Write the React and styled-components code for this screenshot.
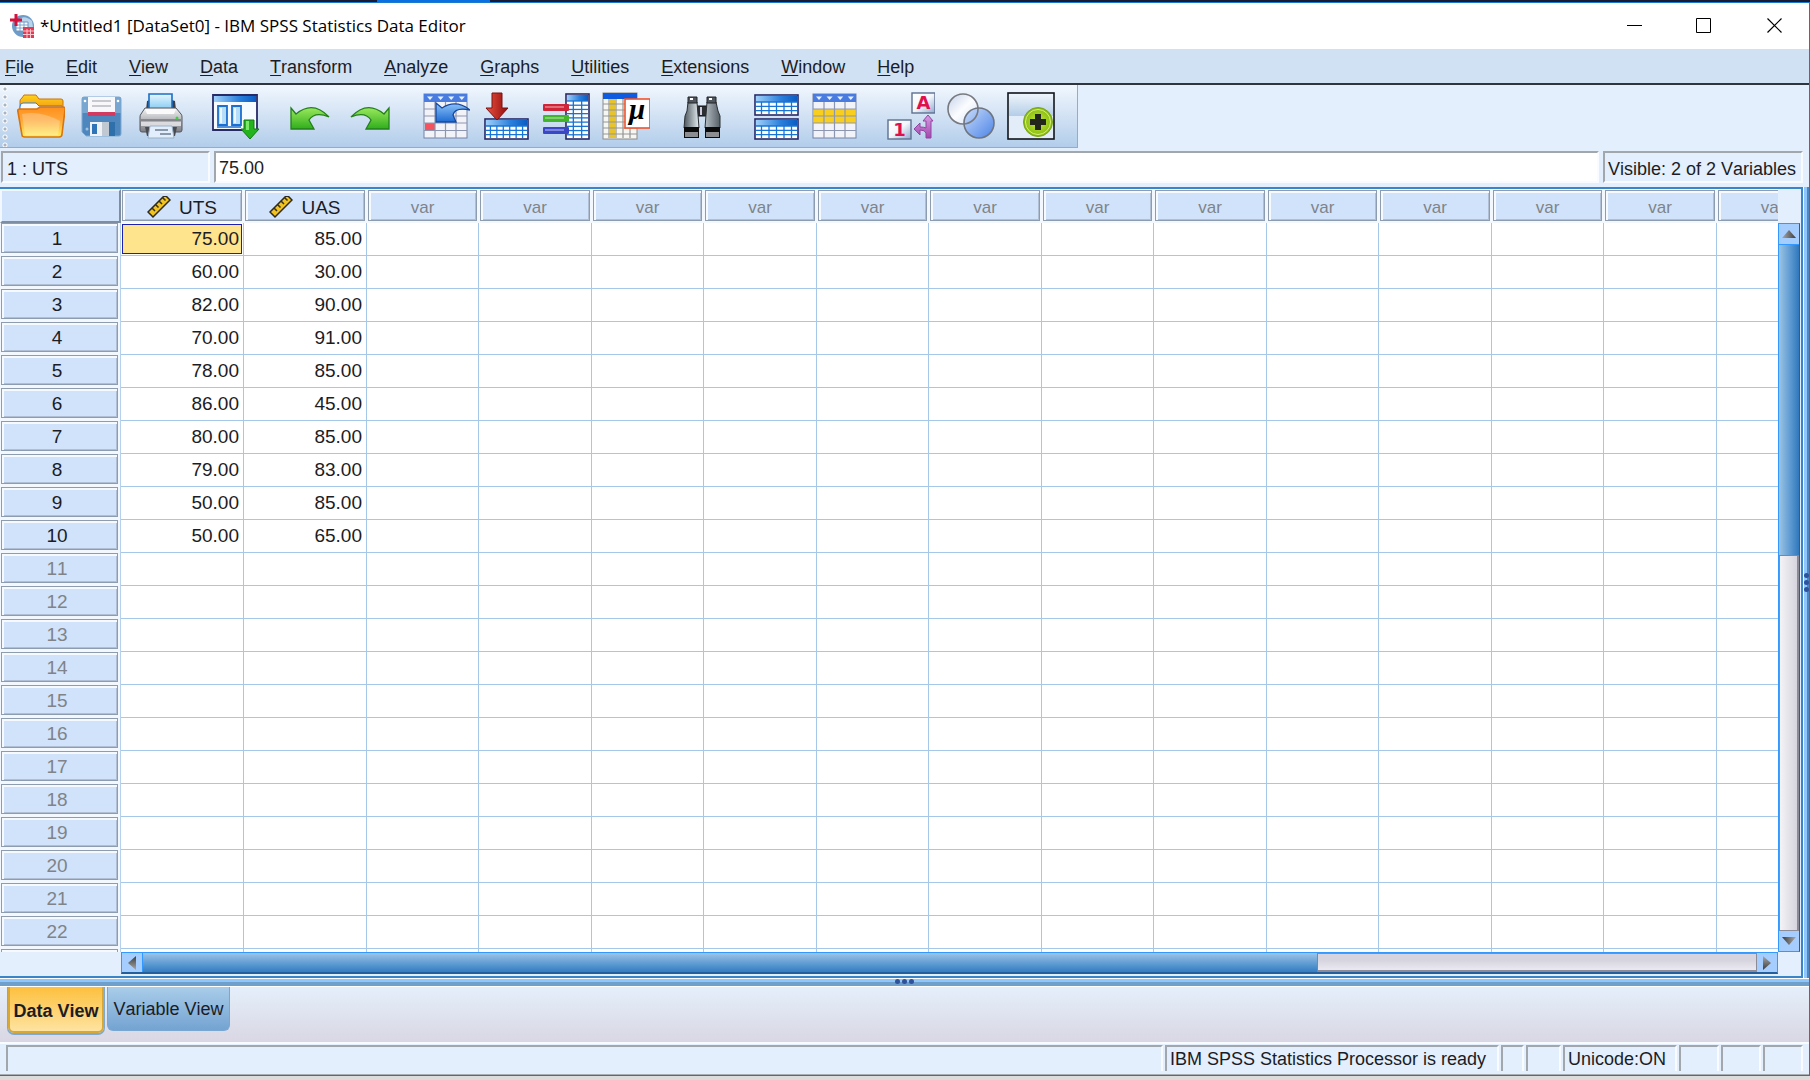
import React from "react";
import styled, { createGlobalStyle } from "styled-components";

const Global = createGlobalStyle`
  * { box-sizing: border-box; }
  body {
    margin: 0;
    background: #dcdcdc;
    color: #1c1c24;
    font: 18px/22px "Liberation Sans", Arial, sans-serif;
    font-kerning: none;
  }
  button, input { font: inherit; color: inherit; }
`;

const Desktop = styled.div`
  height: 100vh;
  min-height: 480px;
  display: flex;
  flex-direction: column;
  padding-bottom: 4px;
  overflow: hidden;
`;
const Backdrop = styled.div`
  height: 2px;
  flex: none;
  background: linear-gradient(90deg, #191a36 0 377px, #0a6fe0 377px 490px, #191a36 490px);
`;
const Window = styled.div`
  flex: 1;
  min-height: 0;
  display: flex;
  flex-direction: column;
  border: 1px solid #1a7ad0;
  border-left: 0;
  background: #e3effc;
`;

const TitleBar = styled.header`
  flex: none;
  height: 46px;
  display: flex;
  align-items: center;
  background: #fff;
  padding-left: 10px;
`;
const Title = styled.h1`
  flex: 1;
  margin: 0 0 0 6px;
  font: 400 17px/24px "Open Sans", "Noto Sans", sans-serif;
  color: #000;
  white-space: nowrap;
`;
const CaptionButton = styled.button`
  width: 70px;
  height: 46px;
  padding: 0;
  border: 0;
  background: none;
  display: flex;
  align-items: center;
  justify-content: center;
`;

const MenuBar = styled.nav`
  flex: none;
  height: 36px;
  display: flex;
  align-items: center;
  gap: 32px;
  padding: 2px 0 0 5px;
  background: #cfe1f3;
  border-bottom: 2px solid #30343c;
`;
const MenuButton = styled.button`
  padding: 0;
  border: 0;
  background: none;
  white-space: nowrap;
  u { text-underline-offset: 2px; }
`;

const ToolRow = styled.div`
  flex: none;
  display: flex;
`;
const Toolbar = styled.div`
  display: flex;
  gap: 15px;
  height: 63px;
  padding-right: 16px;
  border-right: 1px solid #a3a9b2;
  border-bottom: 1px solid #a3a9b2;
  background: linear-gradient(#f1f7fe, #d5e4f5 45%, #b2cdea);
`;
const Grip = styled.div`
  width: 11px;
  margin-right: -15px;
  background: radial-gradient(circle at 5px 4px, #a9b4c2 0 1px, #fff 2px, transparent 3px) 0 0 / 11px 8px;
`;
const ToolGroup = styled.div`
  display: flex;
`;
const ToolButton = styled.button`
  width: 60px;
  height: 62px;
  padding: 0;
  border: 0;
  background: none;
  display: flex;
  align-items: center;
  justify-content: center;
`;

const EditRow = styled.div`
  flex: none;
  display: flex;
  gap: 4px;
  height: 39px;
  padding: 3px 6px 4px 1px;
`;
const sunken = `
  border: 2px solid #a2a6ad;
  border-right-color: #f8fbff;
  border-bottom-color: #f8fbff;
`;
const CellName = styled.div`
  ${sunken}
  width: 209px;
  padding: 4px 4px 0;
  line-height: 24px;
`;
const CellInput = styled.input`
  ${sunken}
  flex: 1;
  min-width: 0;
  padding: 2px 3px 0;
  background: #fff;
  outline: 0;
`;
const VisibleCount = styled.div`
  ${sunken}
  width: 200px;
  padding: 4px 3px 0;
  line-height: 24px;
  white-space: nowrap;
`;

const Workspace = styled.main`
  flex: 1;
  min-height: 0;
  display: grid;
  grid-template: minmax(0, 1fr) 9px / minmax(0, 1fr) 6px;
`;
const Pane = styled.section`
  display: grid;
  grid-template: minmax(0, 1fr) 24px / minmax(0, 1fr) 23px;
  border: 2px solid #3a85c8;
  border-left: 0;
`;
const SideSplitter = styled.div`
  display: flex;
  flex-direction: column;
  align-items: center;
  justify-content: center;
  gap: 2px;
  background: linear-gradient(90deg, #fff 0 1px, #8fc6fb 1px 4px, #4f88c0 4px);
`;
const BottomSplitter = styled.div`
  grid-column: 1 / -1;
  display: flex;
  align-items: center;
  justify-content: center;
  gap: 2px;
  padding-bottom: 2px;
  background: linear-gradient(#fff 0 1px, #8fc6fb 1px 4px, #6f9fcb 4px 8px, #fff 8px);
`;
const Dot = styled.i`
  width: 5px;
  height: 5px;
  border-radius: 50%;
  background: #2f529c;
`;

const Sheet = styled.div`
  overflow: hidden;
`;
const Table = styled.table`
  table-layout: fixed;
  width: 1829px;
  border-collapse: separate;
  border-spacing: 0;
  background: #fff;
`;
const HeadCell = styled.th`
  height: 34px;
  padding: 1px 2px 2px 1px;
  background: #f3f8fe;
  font-weight: 400;
`;
const Corner = styled.td`
  padding: 0;
  background: #d0e3fb;
  border: 2px solid #7f8da0;
  border-top-color: #f3f8fe;
  border-left-color: #f3f8fe;
`;
const HeadBox = styled.div`
  height: ${(p) => (p.$row ? 30 : 31)}px;
  display: flex;
  align-items: center;
  justify-content: center;
  gap: 8px;
  background: #d0e3fb;
  border: 1px solid #8e9cb0;
  box-shadow: inset 2px 2px 0 #f6faff, inset -1px -1px 0 #b0bfd3;
  color: ${(p) => (p.$muted ? "#808388" : "#1c1c24")};
  font-size: ${(p) => (p.$size ? p.$size : 18)}px;
  padding-right: ${(p) => (p.$row ? 5 : 0)}px;
  padding-top: ${(p) => (p.$row ? 2 : 4)}px;
`;
const RowHead = styled.th`
  height: 33px;
  padding: 0 2px 3px 1px;
  background: #f3f8fe;
  border-right: 1px solid #b5d1ec;
  font-weight: 400;
`;
const Cell = styled.td`
  height: 33px;
  padding: 0 4px 1px 2px;
  border-right: 1px solid #a6c8e8;
  border-bottom: 1px solid #a6c8e8;
  font-size: 19px;
  line-height: 22px;
  text-align: right;
  background: ${(p) => (p.$on ? "#fee48c" : "#fff")};
  box-shadow: ${(p) => (p.$on ? "inset 0 0 0 1px #fff, inset 0 0 0 2px #1e22aa" : "none")};
`;

const VBar = styled.div`
  display: flex;
  flex-direction: column;
  width: 22px;
  margin-top: 34px;
  border: 1px solid #3399ff;
  border-right-color: #235f9c;
`;
const HBar = styled.div`
  display: flex;
  height: 22px;
  margin-left: 121px;
  border: 1px solid #3399ff;
  border-bottom: 2px solid #235f9c;
`;
const ArrowButton = styled.button`
  flex: none;
  width: ${(p) => (p.$v ? 20 : 20)}px;
  height: ${(p) => (p.$v ? 20 : 19)}px;
  padding: 0;
  border: 0;
  background: #a5ceff;
  display: flex;
  align-items: center;
  justify-content: center;
`;
const Thumb = styled.div`
  flex: ${(p) => p.$share} 0 0;
  background: ${(p) =>
    p.$v
      ? "linear-gradient(90deg, #9cc4e4, #6aa3d6 45%, #2f78bd)"
      : "linear-gradient(#9cc6e8, #6aa3d6 45%, #337dc2)"};
  border: 0 solid #3399ff;
  border-width: ${(p) => (p.$v ? "1px 0" : "0 1px")};
`;
const Track = styled.div`
  flex: ${(p) => p.$share} 0 0;
  border: 1px solid #8c8c98;
  border-width: ${(p) => (p.$v ? "0 2px 1px 1px" : "1px 1px 2px 0")};
  background: ${(p) =>
    p.$v ? "linear-gradient(90deg, #f4f3f6, #d6d4de)" : "linear-gradient(#d6d4de 40%, #ebe9f0)"};
`;

const Tabs = styled.div`
  flex: none;
  height: 55px;
  display: flex;
  align-items: flex-start;
  gap: 3px;
  padding-left: 8px;
  background: linear-gradient(#e4effb, #d9d7e3);
`;
const Tab = styled.button`
  width: ${(p) => (p.$on ? 96 : 123)}px;
  height: ${(p) => (p.$on ? 46 : 44)}px;
  padding: ${(p) => (p.$on ? 4 : 0)}px 0 0;
  white-space: nowrap;
  border: ${(p) => (p.$on ? "2px solid #d7a738" : "1px solid #79a7d3")};
  border-top: 0;
  border-radius: 0 0 6px 6px;
  font-weight: ${(p) => (p.$on ? 700 : 400)};
  background: ${(p) =>
    p.$on ? "linear-gradient(#fdc03e, #fee3a0)" : "linear-gradient(#a9cde9, #74a3d2)"};
  box-shadow: ${(p) => (p.$on ? "0 1px 0 1px #7fa9cf" : "none")};
`;

const StatusBar = styled.footer`
  flex: none;
  display: flex;
  gap: 2px;
  height: 33px;
  padding: 1px 6px 3px 6px;
  border-top: 2px solid #f8fbff;
  border-bottom: 1px solid #a9adb4;
`;
const StatusCell = styled.div`
  ${sunken}
  border-bottom: 0;
  flex: ${(p) => (p.$w ? `0 0 ${p.$w}px` : "1 1 0")};
  padding: 0 3px;
  line-height: 25px;
  white-space: nowrap;
`;

/* ---------- drawings ---------- */

const lines = (n, from, step) => Array.from({ length: n }, (_, i) => from + i * step);

const Icon = ({ children }) => (
  <svg width="48" height="48" viewBox="0 0 48 48" aria-hidden="true">
    {children}
  </svg>
);

const MiniTable = ({ x, y, w, h, cols, rows, head = 7 }) => (
  <g>
    <rect x={x + 1} y={y + 1} width={w - 2} height={h - 2} fill="#fff" stroke="#262a66" strokeWidth="1.6" />
    <rect x={x + 2} y={y + 2} width={w - 4} height={head - 1} fill="url(#blueHead)" />
    {lines(cols - 1, 1, 1).map((i) => (
      <path key={"c" + i} d={`M${x + (w * i) / cols} ${y + head + 1}V${y + h - 2}`} stroke="#1674d6" strokeWidth="1.3" />
    ))}
    {lines(rows, 0, 1).map((i) => (
      <path key={"r" + i} d={`M${x + 2} ${y + head + 1 + (i * (h - head - 2)) / rows}H${x + w - 2}`} stroke="#1674d6" strokeWidth="1.3" />
    ))}
  </g>
);

const Defs = () => (
  <svg width="0" height="0" style={{ display: "block" }} aria-hidden="true">
    <defs>
      <linearGradient id="blueHead"><stop stopColor="#9fd0fa" /><stop offset=".6" stopColor="#2a80dc" /><stop offset="1" stopColor="#0a5cc4" /></linearGradient>
      <linearGradient id="orange" x2="0" y2="1"><stop stopColor="#ff8f1c" /><stop offset=".45" stopColor="#ffa83a" /><stop offset="1" stopColor="#fff05e" /></linearGradient>
      <linearGradient id="folderBack" x2="0" y2="1"><stop stopColor="#ffd21a" /><stop offset="1" stopColor="#f39a14" /></linearGradient>
      <linearGradient id="green" x2="0" y2="1"><stop stopColor="#9be85c" /><stop offset="1" stopColor="#2fae1c" /></linearGradient>
      <linearGradient id="steel" x2="0" y2="1"><stop stopColor="#f5f5f6" /><stop offset=".5" stopColor="#b5b6ba" /><stop offset="1" stopColor="#7d7e84" /></linearGradient>
      <linearGradient id="paper" x2="0" y2="1"><stop stopColor="#e6f7ff" /><stop offset="1" stopColor="#7cc6f2" /></linearGradient>
      <linearGradient id="red"><stop stopColor="#ee5140" /><stop offset="1" stopColor="#8e0c0c" /></linearGradient>
      <linearGradient id="blueArrow" x2="0" y2="1"><stop stopColor="#8cc4f8" /><stop offset="1" stopColor="#1f6bd2" /></linearGradient>
      <linearGradient id="barrel"><stop stopColor="#4c555b" /><stop offset=".4" stopColor="#dfe8ec" /><stop offset="1" stopColor="#555f66" /></linearGradient>
      <linearGradient id="tile" x2="1" y2="1"><stop stopColor="#fff" /><stop offset=".5" stopColor="#f3f6fb" /><stop offset="1" stopColor="#8fa9cf" /></linearGradient>
      <linearGradient id="ball" x2="1" y2="1"><stop stopColor="#c9dcfa" /><stop offset="1" stopColor="#4c84e6" /></linearGradient>
      <linearGradient id="glass" x2="1" y2="1"><stop stopColor="#c4d3ea" /><stop offset=".5" stopColor="#fbfcff" /><stop offset="1" stopColor="#d4e0f2" /></linearGradient>
      <linearGradient id="sky" x2="0" y2="1"><stop stopColor="#eef4fb" /><stop offset="1" stopColor="#b4cde8" /></linearGradient>
      <linearGradient id="purple" x2="0" y2="1"><stop stopColor="#d79be4" /><stop offset="1" stopColor="#a347ad" /></linearGradient>
      <radialGradient id="lime"><stop stopColor="#c6ec3a" /><stop offset="1" stopColor="#84b80e" /></radialGradient>
      <linearGradient id="arrowGrey" x2="1"><stop stopColor="#a8a8a8" /><stop offset="1" stopColor="#3c3c3c" /></linearGradient>
    </defs>
  </svg>
);

const OpenIcon = () => (
  <Icon>
    <path d="M3 17V9q0-2 2-3l2-3h12l3 4h22q2 0 2 2v8z" fill="url(#folderBack)" stroke="#c9740c" />
    <path d="M3 20v-5q0-4 3-4h13l3 3h23v6z" fill="#f4f9ff" stroke="#2f7fe0" />
    <path d="M1 20q-1-3 2-3h17l3-2h23q3 0 2 3l-3 24q0 3-3 3H8q-3 0-3-2z" fill="url(#orange)" stroke="#d9740e" strokeWidth="1.6" />
    <path d="M5 22q18-4 38 7l-2 14H8z" fill="#fff" opacity=".25" />
  </Icon>
);
const SaveIcon = () => (
  <Icon>
    <path d="M5 7q0-2 2-2h35q2 0 2 2v35q0 2-2 2H9l-4-4z" fill="#4d87bd" stroke="#7fa9d2" />
    <path d="M5 7q0-2 2-2h4v16H5zM38 5h4q2 0 2 2v14h-6z" fill="#77a6d1" />
    <path d="M11 5h27v16H11z" fill="#f8f8fa" /><path d="M11 20h27v4H11z" fill="#d23a60" />
    <path d="M15 9h19M15 14h19" stroke="#b7b9c0" strokeWidth="1.5" />
    <path d="M13 30h19v14H13z" fill="#eef1f5" /><path d="M15 32h5v10h-5z" fill="#2f74b8" /><path d="M25 30h7v14h-7z" fill="#c0c8d2" />
    <path d="M32 30h6v14h-6z" fill="#2f6faa" /><circle cx="8" cy="9" r="1.3" fill="#fff" /><circle cx="41" cy="9" r="1.3" fill="#fff" /><circle cx="10" cy="37" r="1.5" fill="#9fc0df" />
  </Icon>
);
const PrintIcon = () => (
  <Icon>
    <path d="M10 9l3-1v10H9zM35 8l3 1 1 9h-4z" fill="#3d3e44" />
    <path d="M12 2h23v17H12z" fill="url(#paper)" stroke="#1b6fc4" strokeWidth="1.6" />
    <path d="M8 16h31l5 6q1 1 1 3v13q0 2-2 2H5q-2 0-2-2V25q0-2 1-3z" fill="url(#steel)" stroke="#55565c" />
    <path d="M8 17h31l-2 5H10z" fill="#fafafa" /><path d="M4 28h40" stroke="#55565c" />
    <path d="M4 30h40v4H4z" fill="#e9e9ec" opacity=".8" /><circle cx="40" cy="26" r="1.5" fill="#3ed13e" />
    <path d="M8 35h32l-2 9H10z" fill="#4a4b50" />
    <path d="M13 34h22l2 12H11z" fill="#e2eefb" stroke="#9ab0c8" /><path d="M18 38h13M23 42h11" stroke="#6d7c92" strokeWidth="1.5" />
  </Icon>
);
const RecallIcon = () => (
  <Icon>
    <path d="M1 3h44v35H1z" fill="#f6fbff" stroke="#262a66" strokeWidth="1.8" />
    <path d="M2 4h42v6H2z" fill="url(#blueHead)" />
    <path d="M6 14h9v19H6zM20 14h9v19h-9z" fill="#b7def8" stroke="#1b6fd0" strokeWidth="1.8" />
    <path d="M8 16h2v15H8zM22 16h2v15h-2z" fill="#eaf7ff" /><path d="M5 35h24" stroke="#1b6fd0" strokeWidth="1.5" />
    <path d="M32 28h10v9h5L38 47l-9-10h3z" fill="#24b31c" stroke="#117a10" />
    <path d="M34 29h3v9h-3z" fill="#7be86a" />
  </Icon>
);
const undoPath = "M4 16l5 6Q26 8 42 25q-14-6-20 3l5 9H4z";
const UndoIcon = () => (<Icon><path d={undoPath} fill="url(#green)" stroke="#23801a" strokeWidth="1.3" /></Icon>);
const RedoIcon = () => (<Icon><g transform="matrix(-1 0 0 1 46 0)"><path d={undoPath} fill="url(#green)" stroke="#23801a" strokeWidth="1.3" /></g></Icon>);

const CaseGrid = ({ x = 2 }) => (
  <g>
    <rect x={x} y="2" width="43" height="44" fill="#f2f3f8" stroke="#7482a6" />
    <rect x={x} y="2" width="43" height="8" fill="#4a7ce0" />
    {lines(4, 0, 1).map((i) => <path key={i} d={`M${x + 3 + i * 10.6} 4.500h6l-3 3.500z`} fill="#e8f3ff" />)}
  </g>
);
const GridLines = ({ x = 2 }) => (
  <path d={`M${x + 11} 10v36M${x + 21.500} 10v36M${x + 32} 10v36M${x} 17h43M${x} 24h43M${x} 31h43M${x} 38.500h43`} stroke="#8d96b0" strokeWidth="1.2" />
);
const GotoCaseIcon = () => (
  <Icon>
    <CaseGrid /><rect x="3" y="31" width="10" height="7" fill="#f4525e" /><GridLines />
    <path d="M14 11l6 5Q34 7 48 18q-15-3-17 5l3 7H14z" fill="url(#blueArrow)" stroke="#17479c" strokeWidth="1.3" />
  </Icon>
);
const GotoVarIcon = () => (
  <Icon>
    <MiniTable x={2} y={26} w={45} h={22} cols={7} rows={3} />
    <path d="M10 1h10v15h6L15 28 4 16h6z" fill="url(#red)" stroke="#7d1010" />
  </Icon>
);
const VariablesIcon = () => (
  <Icon>
    <MiniTable x={23} y={1} w={25} h={47} cols={3} rows={9} />
    {[["#d02438", 12], ["#42b62a", 23], ["#3a48c8", 35]].map(([c, y]) => (
      <g key={y}><rect x="1" y={y} width="26" height="7" rx="1" fill={c} /><path d={`M3 ${y + 3}h19`} stroke="#fff" opacity=".45" strokeWidth="1.5" /></g>
    ))}
  </Icon>
);
const MuIcon = () => (
  <Icon>
    <rect x="1" y="1" width="34" height="46" fill="#f6f6f2" stroke="#8c8c8c" /><rect x="1" y="1" width="34" height="6" fill="#0f5be0" />
    <rect x="8" y="7" width="5" height="39" fill="#e7c32c" />
    <path d="M7 7v39M14 7v39M21 7v39M28 7v39M1 12h34M1 18h34M1 24h34M1 30h34M1 36h34M1 42h34" stroke="#959595" strokeWidth="1.2" />
    <rect x="23" y="7" width="25" height="29" fill="#fff" stroke="#f0532c" strokeWidth="1.6" />
    <text x="35" y="27" textAnchor="middle" fontFamily="Liberation Serif, serif" fontWeight="700" fontStyle="italic" fontSize="29" fill="#000">μ</text>
  </Icon>
);
const FindIcon = () => (
  <Icon>
    <path d="M20 14h10v10H20z" fill="#2b2f33" stroke="#111" /><path d="M24 15v8" stroke="#ccd" strokeWidth="2" />
    <path d="M11 10h9l2 26H7l1-12 2-5zM30 10h9l2 9 2 5v12H28z" fill="url(#barrel)" stroke="#2b2f33" />
    <path d="M11 5h9v6h-9zM30 5h9v6h-9z" fill="#4f575d" stroke="#1f2326" /><path d="M13 7h3M32 7h3" stroke="#fff" strokeWidth="2" />
    <path d="M7 35h15v11H7zM28 35h15v11H28z" fill="#0b0b0c" /><path d="M8 40h13v5H8zM29 40h13v5H29z" fill="#8b8d90" />
  </Icon>
);
const SplitIcon = () => (<Icon><MiniTable x={2} y={2} w={45} h={22} cols={6} rows={3} /><MiniTable x={2} y={26} w={45} h={22} cols={6} rows={3} /></Icon>);
const SelectIcon = () => (<Icon><CaseGrid x={1} /><rect x="2" y="17" width="41" height="14" fill="#f8cf1e" /><GridLines x={1} /></Icon>);
const LabelsIcon = () => (
  <Icon>
    <rect x="25" y="1" width="23" height="20" fill="url(#tile)" stroke="#5e7191" strokeWidth="1.4" />
    <text x="36.500" y="17" textAnchor="middle" fontFamily="DejaVu Sans, sans-serif" fontWeight="700" fontSize="18" fill="#e0104c">A</text>
    <rect x="1" y="28" width="23" height="19" fill="url(#tile)" stroke="#5e7191" strokeWidth="1.4" />
    <text x="12.500" y="44" textAnchor="middle" fontFamily="DejaVu Sans, sans-serif" fontWeight="700" fontSize="18" fill="#e0104c">1</text>
    <path d="M41 23l5 6h-2v17h-5v-5q-1-3-6-3v5l-6-6 6-6v4q4 0 6 1v-7h-3z" fill="url(#purple)" stroke="#9244a0" />
  </Icon>
);
const SetsIcon = () => (
  <Icon>
    <circle cx="16" cy="17" r="15" fill="url(#glass)" /><circle cx="32" cy="31" r="15" fill="url(#ball)" />
    <circle cx="16" cy="17" r="15" fill="none" stroke="#77797f" strokeWidth="1.6" /><circle cx="32" cy="31" r="15" fill="none" stroke="#6f7580" strokeWidth="1.6" />
  </Icon>
);
const AddIcon = () => (
  <Icon>
    <rect x="1" y="1" width="46" height="46" fill="#e3edf9" stroke="#101418" strokeWidth="1.6" /><path d="M2 2h44v22H2z" fill="url(#sky)" />
    <circle cx="31" cy="30" r="14.500" fill="url(#lime)" stroke="#7aa51a" /><circle cx="31" cy="30" r="12.500" fill="none" stroke="#d9f27a" />
    <path d="M28 22h6v5h5v6h-5v5h-6v-5h-5v-6h5z" fill="#23261a" />
  </Icon>
);
const AppIcon = () => (
  <svg width="24" height="24" viewBox="0 0 24 24" aria-hidden="true">
    <circle cx="13" cy="12" r="11" fill="#6d9cc8" /><path d="M8 6q6-6 14 1l1 6-12 1z" fill="#b9d3ea" />
    <path d="M6 8h12v9H6z" fill="#fff" stroke="#6f94bd" /><path d="M6 11h12M6 14h12M10 8v9M14 8v9" stroke="#7fa4cc" />
    <path d="M13 13h11v11H13z" fill="#e23a52" /><path d="M13 17h11M13 20.500h11M17 15v9M20.500 15v9" stroke="#fbc6cd" />
    <path d="M0 6h12M6 0v12" stroke="#d4123a" strokeWidth="3" />
  </svg>
);
const RulerIcon = () => (
  <svg width="24" height="24" viewBox="0 0 24 24" aria-hidden="true">
    <path d="M1 18L18 1l5 5L6 23z" fill="#f2c21e" stroke="#2c2a20" strokeWidth="1.5" transform="translate(0 -2)" />
    <path d="M5 12l3 3M8.500 8.500l3 3M12 5l3 3M15.500 1.500l3 3" stroke="#3a3214" strokeWidth="1.5" />
  </svg>
);
const Arrow = ({ turn }) => (
  <svg width="14" height="14" viewBox="0 0 14 14" aria-hidden="true">
    <path d="M7 3l7 8H0z" fill="url(#arrowGrey)" transform={`rotate(${turn} 7 7)`} />
  </svg>
);

/* ---------- data ---------- */

const menus = ["File", "Edit", "View", "Data", "Transform", "Analyze", "Graphs", "Utilities", "Extensions", "Window", "Help"];
const tools = [
  [["Open", OpenIcon], ["Save", SaveIcon], ["Print", PrintIcon]],
  [["Recall dialog", RecallIcon]],
  [["Undo", UndoIcon], ["Redo", RedoIcon]],
  [["Go to case", GotoCaseIcon], ["Go to variable", GotoVarIcon], ["Variables", VariablesIcon], ["Descriptives", MuIcon]],
  [["Find", FindIcon]],
  [["Split file", SplitIcon], ["Select cases", SelectIcon]],
  [["Value labels", LabelsIcon], ["Variable sets", SetsIcon], ["Customize", AddIcon]],
];
const variables = ["UTS", "UAS"];
const data = [
  ["75.00", "85.00"], ["60.00", "30.00"], ["82.00", "90.00"], ["70.00", "91.00"], ["78.00", "85.00"],
  ["86.00", "45.00"], ["80.00", "85.00"], ["79.00", "83.00"], ["50.00", "85.00"], ["50.00", "65.00"],
];
const numberedRows = 22;
const spare = lines(13, 0, 1);
const rows = lines(numberedRows + 1, 0, 1);

export default function App() {
  return (
    <Desktop>
      <Global />
      <Defs />
      <Backdrop />
      <Window>
        <TitleBar>
          <AppIcon />
          <Title>*Untitled1 [DataSet0] - IBM SPSS Statistics Data Editor</Title>
          <CaptionButton aria-label="Minimize"><svg width="16" height="16"><path d="M1 7.500h15" stroke="#000" /></svg></CaptionButton>
          <CaptionButton aria-label="Maximize"><svg width="16" height="16"><path d="M.5.500h14v14H.5z" fill="none" stroke="#000" /></svg></CaptionButton>
          <CaptionButton aria-label="Close"><svg width="16" height="16"><path d="M1.500.500l14 14M15.500.500l-14 14" stroke="#000" strokeWidth="1.2" /></svg></CaptionButton>
        </TitleBar>
        <MenuBar>
          {menus.map((m) => <MenuButton key={m}><u>{m[0]}</u>{m.slice(1)}</MenuButton>)}
        </MenuBar>
        <ToolRow>
          <Toolbar>
            <Grip />
            {tools.map((group, i) => (
              <ToolGroup key={i}>
                {group.map(([name, Glyph]) => <ToolButton key={name} aria-label={name}><Glyph /></ToolButton>)}
              </ToolGroup>
            ))}
          </Toolbar>
        </ToolRow>
        <EditRow>
          <CellName>1 : UTS</CellName>
          <CellInput aria-label="Cell value" defaultValue="75.00" />
          <VisibleCount>Visible: 2 of 2 Variables</VisibleCount>
        </EditRow>
        <Workspace>
          <Pane>
            <Sheet>
              <Table>
                <colgroup>
                  <col width="121" /><col width="123" /><col width="123" />
                  {spare.map((i) => <col key={i} width={i % 2 ? 113 : 112} />)}
                </colgroup>
                <thead>
                  <tr>
                    <Corner />
                    {variables.map((v) => <HeadCell key={v}><HeadBox $size={19}><RulerIcon />{v}</HeadBox></HeadCell>)}
                    {spare.map((i) => <HeadCell key={i}><HeadBox $muted $size={17}>var</HeadBox></HeadCell>)}
                  </tr>
                </thead>
                <tbody>
                  {rows.map((r) => (
                    <tr key={r}>
                      <RowHead><HeadBox $row $size={19} $muted={r >= data.length}>{r < numberedRows ? r + 1 : null}</HeadBox></RowHead>
                      {variables.map((v, c) => <Cell key={v} $on={r === 0 && c === 0}>{data[r]?.[c]}</Cell>)}
                      {spare.map((i) => <Cell key={i} />)}
                    </tr>
                  ))}
                </tbody>
              </Table>
            </Sheet>
            <VBar>
              <ArrowButton $v aria-label="Scroll up"><Arrow turn={0} /></ArrowButton>
              <Thumb $v $share={311} /><Track $v $share={375} />
              <ArrowButton $v aria-label="Scroll down"><Arrow turn={180} /></ArrowButton>
            </VBar>
            <HBar>
              <ArrowButton aria-label="Scroll left"><Arrow turn={270} /></ArrowButton>
              <Thumb $share={1175} /><Track $share={438} />
              <ArrowButton aria-label="Scroll right"><Arrow turn={90} /></ArrowButton>
            </HBar>
          </Pane>
          <SideSplitter><Dot /><Dot /><Dot /></SideSplitter>
          <BottomSplitter><Dot /><Dot /><Dot /></BottomSplitter>
        </Workspace>
        <Tabs>
          <Tab $on>Data View</Tab>
          <Tab>Variable View</Tab>
        </Tabs>
        <StatusBar>
          <StatusCell />
          <StatusCell $w={334}>IBM SPSS Statistics Processor is ready</StatusCell>
          <StatusCell $w={23} />
          <StatusCell $w={35} />
          <StatusCell $w={114}>Unicode:ON</StatusCell>
          <StatusCell $w={40} />
          <StatusCell $w={40} />
          <StatusCell $w={40} />
        </StatusBar>
      </Window>
    </Desktop>
  );
}
